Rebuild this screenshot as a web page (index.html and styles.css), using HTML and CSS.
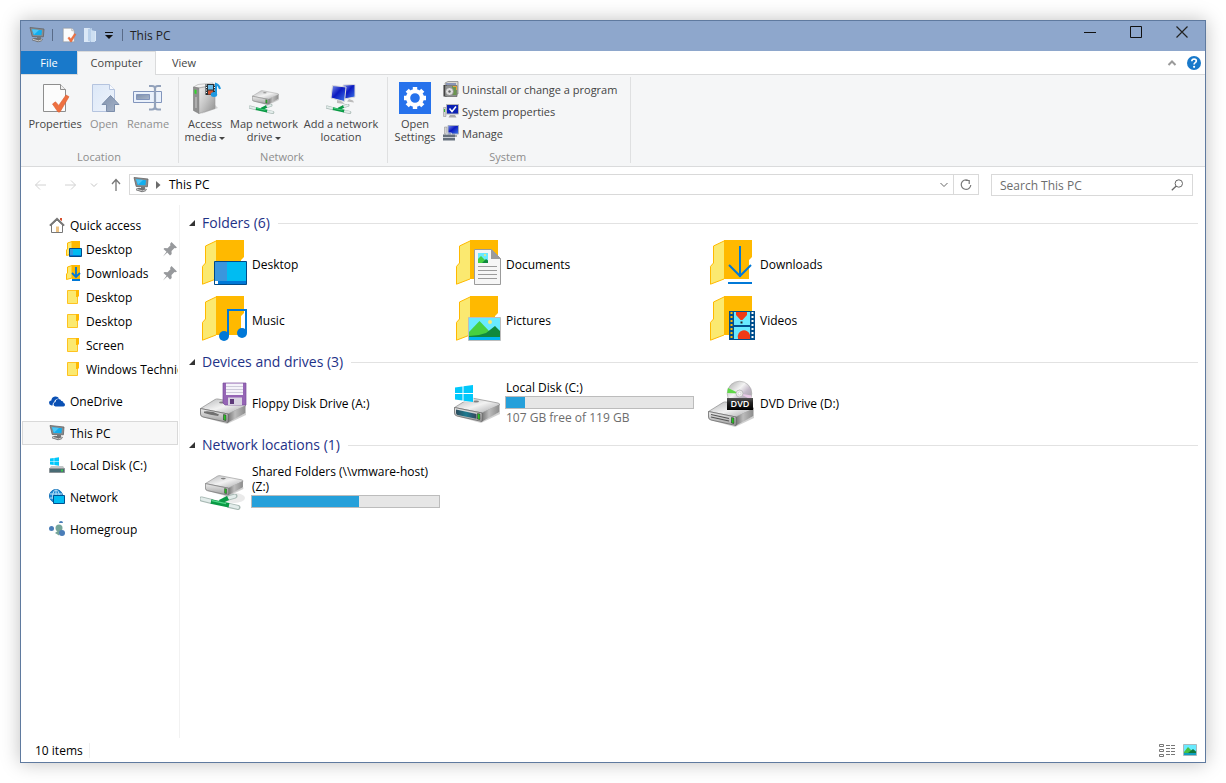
FILE: index.html
```html
<!DOCTYPE html>
<html lang="en">
<head>
<meta charset="utf-8">
<meta name="viewport" content="width=device-width, initial-scale=1">
<title>This PC</title>
<link rel="stylesheet" href="styles.css">
</head>
<body>
<svg class="sprite" aria-hidden="true">
  <defs>
    <linearGradient id="metal-top" x1="0" y1="0" x2="1" y2="1"><stop offset="0" stop-color="#b4b5b7"/><stop offset=".5" stop-color="#f2f2f2"/><stop offset="1" stop-color="#a4a5a7"/></linearGradient>
    <linearGradient id="metal-side" x1="0" y1="0" x2="1" y2="0"><stop offset="0" stop-color="#777"/><stop offset=".4" stop-color="#bcbcbc"/><stop offset="1" stop-color="#8c8c8c"/></linearGradient>
    <linearGradient id="metal-front" x1="0" y1="0" x2="0" y2="1"><stop offset="0" stop-color="#ececec"/><stop offset="1" stop-color="#a0a0a0"/></linearGradient>
    <linearGradient id="teal-front" x1="0" y1="0" x2="1" y2="0"><stop offset="0" stop-color="#2b4b5c"/><stop offset=".5" stop-color="#1e7b90"/><stop offset="1" stop-color="#34465c"/></linearGradient>
    <linearGradient id="screen-blue" x1="0" y1="0" x2="1" y2="1"><stop offset="0" stop-color="#7d93ea"/><stop offset=".45" stop-color="#0c1ac0"/><stop offset="1" stop-color="#3f7be8"/></linearGradient>
    <linearGradient id="pale-page" x1="0" y1="0" x2="1" y2="1"><stop offset="0" stop-color="#dce8f8"/><stop offset="1" stop-color="#eef3fb"/></linearGradient>
    <linearGradient id="slate" x1="0" y1="0" x2="1" y2="1"><stop offset="0" stop-color="#7f90ab"/><stop offset="1" stop-color="#a9b6cb"/></linearGradient>
    <linearGradient id="disc" x1="0" y1="0" x2="1" y2="1"><stop offset="0" stop-color="#a5a5a5"/><stop offset=".4" stop-color="#f3f3f3"/><stop offset=".6" stop-color="#c3b9c8"/><stop offset="1" stop-color="#959595"/></linearGradient>
    <linearGradient id="dvd-plate" x1="0" y1="0" x2="0" y2="1"><stop offset="0" stop-color="#555"/><stop offset=".4" stop-color="#222"/><stop offset="1" stop-color="#000"/></linearGradient>
    <linearGradient id="tower" x1="0" y1="0" x2="1" y2="1"><stop offset="0" stop-color="#f2f2f2"/><stop offset=".5" stop-color="#c4c4c4"/><stop offset="1" stop-color="#8e8e8e"/></linearGradient>

    <symbol id="pc" viewBox="0 0 16 16">
      <path d="M1 .5L15 2l-.6 7.800L3.200 9.500z" fill="#8a8b8d" stroke="#636466" stroke-width=".8"/>
      <path d="M3 2.200L13 3.300l-.6 5L4.600 8z" fill="#12aeee"/>
      <path d="M3 2.200l7 .8-5 4.800z" fill="#4fc6f5"/>
      <path d="M8 9.800l4 .2v2H8z" fill="#77787a"/>
      <path d="M3 11.800l3-1 8 1.200-1.500 2.200-3.500 1-6-2z" fill="#6f7072"/>
      <path d="M3.500 12.200l6 1.700 3.500-1.200" fill="none" stroke="#c9c9c9"/>
    </symbol>

    <symbol id="folder-big" viewBox="0 0 48 48">
      <path d="M16 0h28v17l-3 3v19H16z" fill="#ffb900"/>
      <path d="M2.500 44.200V26.400L5.500 23V6L16 1v38z" fill="#fbe970"/>
      <path d="M16 1L5.500 6v17l-3 3.400v17.800L16 39" fill="none" stroke="#ffb900"/>
    </symbol>

    <symbol id="folder-small" viewBox="0 0 16 16">
      <path d="M1.500 1.500h10v13h-10z" fill="#fbe970" stroke="#ffc220"/>
      <path d="M10 1h3v6l-1 1h-2z" fill="#ffb900"/>
    </symbol>

    <symbol id="folder-open" viewBox="0 0 16 16">
      <path d="M6 0h8v14H6z" fill="#ffb900"/>
      <path d="M.5 14.500V9l1-1V2L6 .5v12.500z" fill="#fbe970" stroke="#ffb900"/>
    </symbol>

    <symbol id="drive" viewBox="0 0 48 48">
      <path d="M2 38l25 7 19-9v-2L27 42z" fill="#9a9a9a" opacity=".45"/>
      <path d="M.5 29.500L15 20.500q1.500-.8 3-.5l26 5q2 .5 1.500 2L28 35z" fill="url(#metal-top)" stroke="#8d8d8d" stroke-width=".7"/>
      <path d="M28 35l17.500-8.500V34L28 43.500z" fill="url(#metal-side)"/>
      <path d="M.5 29.500L28 35v8.500L3 38Q.5 37.500.5 35z" fill="url(#metal-front)" stroke="#6b6b6b" stroke-width=".8"/>
      <path d="M23.500 35.500l2.500.5v5.500l-2.500-.5z" fill="#26c421" stroke="#333" stroke-width=".6"/>
      <ellipse cx="22" cy="23.500" rx="3" ry="1" fill="#808080"/>
    </symbol>

    <symbol id="cable" viewBox="0 0 48 16">
      <path d="M1.500 5l10 2.500M29 11.500l9 2M28 4l7-2" stroke="#a9bab5" stroke-width="5" stroke-linecap="round"/>
      <path d="M2 5l9 2.200M30 11.500l7.500 1.800M29 3.800l5.500-1.600" stroke="#e2ecea" stroke-width="3.200" stroke-linecap="round"/>
      <path d="M11 7.500l18 3.800M20 8l8-4" stroke="#0a9a45" stroke-width="4.600"/>
      <path d="M12 6.700l14 3" stroke="#4fd888" stroke-width="1.300"/>
    </symbol>

    <symbol id="page-check" viewBox="0 0 32 32">
      <path d="M4.500 2.500h17l5 5v22h-22z" fill="#fcfcfc" stroke="#8e8e8e"/>
      <path d="M21.500 2.500v5h5" fill="#eee" stroke="#8e8e8e"/>
      <path d="M13.500 22l3-2.200 3.200 3.600L27 13l3 1.700L21 30h-2z" fill="#ee7040" stroke="#d95b2e" stroke-width=".6"/>
    </symbol>

    <symbol id="windows" viewBox="0 0 18 17">
      <path d="M0 2.500l7.500-1V8H0zM8.500 1.300L18 0v8H8.500zM0 9h7.500v6.600L0 14.500zM8.500 9H18v8l-9.500-1.300z" fill="#00c8fb"/>
    </symbol>

    <symbol id="pin" viewBox="0 0 16 16">
      <path d="M9.500 1L15 6.500l-1.500.8-1-.3-3 3 .2 3L8 14.500 5.300 11.500 1 15.500 4.500 10.800 1.500 8l1-1 3 .2 3-3L8 3z" fill="#97999c"/>
    </symbol>
  </defs>
</svg>

<div class="window">
  <header class="titlebar">
    <svg class="i16" aria-hidden="true"><use href="#pc"/></svg>
    <span class="title-sep"></span>
    <button class="quick" aria-label="Properties"><svg class="i16"><use href="#page-check"/></svg></button>
    <button class="quick" aria-label="New folder">
      <svg class="i16" viewBox="0 0 16 16"><path d="M2 1h6v14H2zM10 4h4v10h-4z" fill="#dbe8f7"/><path d="M6 2l4-1v14l-4-1z" fill="#b9d0ea"/><path d="M9 3l4 1v11H9z" fill="#cddff2"/></svg>
    </button>
    <button class="customize" aria-label="Customize Quick Access Toolbar"><svg width="8" height="8" viewBox="0 0 8 8"><path d="M0 1.500h8" stroke="#111"/><path d="M0 4h8L4 8z" fill="#111"/></svg></button>
    <span class="title-sep"></span>
    <h1 class="title">This PC</h1>
    <div class="caption">
      <button aria-label="Minimize"><svg width="14" height="14" viewBox="0 0 14 14"><path d="M1 7.500h12" stroke="#111"/></svg></button>
      <button aria-label="Maximize"><svg width="14" height="14" viewBox="0 0 14 14"><path d="M1.500 1.500h11v11h-11z" fill="none" stroke="#111"/></svg></button>
      <button aria-label="Close"><svg width="14" height="14" viewBox="0 0 14 14"><path d="M1.500 1.500l11 11M12.500 1.500l-11 11" stroke="#222" stroke-width="1.200"/></svg></button>
    </div>
  </header>

  <div class="tabs" role="tablist">
    <button class="tab file" role="tab">File</button>
    <button class="tab active" role="tab" aria-selected="true">Computer</button>
    <button class="tab" role="tab">View</button>
    <div class="tab-tools">
      <button aria-label="Minimize the Ribbon"><svg width="10" height="8" viewBox="0 0 10 8"><path d="M1.500 6L5 2.500 8.500 6" fill="none" stroke="#9a9a9a" stroke-width="2"/></svg></button>
      <button aria-label="Help"><svg width="14" height="14" viewBox="0 0 14 14"><circle cx="7" cy="7" r="7" fill="#1979ca"/><path d="M4.800 5.200Q4.900 3 7.100 3q2.200.1 2.200 1.900 0 1-1.100 1.700T7.100 8.600" fill="none" stroke="#fff" stroke-width="1.700"/><circle cx="7.100" cy="10.800" r="1.100" fill="#fff"/></svg></button>
    </div>
  </div>

  <div class="ribbon">
    <section class="group">
      <div class="tools">
        <button class="big w60"><svg class="i32"><use href="#page-check"/></svg><span>Properties</span></button>
        <button class="big w38" disabled>
          <svg class="i32" viewBox="0 0 32 32"><path d="M4.500 2.500h17l5 5v22h-22z" fill="url(#pale-page)" stroke="#b5c4df"/><path d="M21.500 2.500v5h5" fill="#f7faff" stroke="#b5c4df"/><path d="M22.500 13.500l8.500 9h-4.500v7h-8v-7H14z" fill="url(#slate)" stroke="#7c8eab"/></svg>
          <span>Open</span></button>
        <button class="big w50" disabled>
          <svg class="i32" viewBox="0 0 32 32"><path d="M1.500 9.500h28v11h-28z" fill="#eaf1fb" stroke="#8295bc"/><path d="M4.500 12.500h13v5h-13z" fill="url(#slate)" stroke="#8295bc"/><path d="M17 4h3q3 0 3 2.500v18q0 3-3 3h-3M29 4h-3q-3 0-3 2.500v18q0 3 3 3h3" fill="none" stroke="#93a2bb" stroke-width="2.200"/></svg>
          <span>Rename</span></button>
      </div>
      <h2>Location</h2>
    </section>
    <section class="group network">
      <div class="tools">
        <button class="big w44">
          <svg class="i32" viewBox="0 0 32 32"><path d="M12 32l17-6-3-3z" fill="#999" opacity=".4"/><path d="M4.500 5L9 2.500 24 1v2L9 6z" fill="#f2f2f2" stroke="#aaa" stroke-width=".6"/><path d="M4.500 5L10 6v25.500l-5.500-3z" fill="#8f8f8f" stroke="#777" stroke-width=".6"/><path d="M10 6L26 3.500v23L10 31.500z" fill="url(#tower)" stroke="#999" stroke-width=".6"/><path d="M5.500 7.500v4l2 .5V8z" fill="#2fd52a"/><path d="M7 15v11" stroke="#ccc"/><path d="M16.500 2h10v11h-10z" fill="#263238"/><path d="M19 3h5v4.500h-5z" fill="#6bbbe8"/><path d="M19 8.500h5v4h-5z" fill="#d0522f"/><path d="M17.500 2.500v10M25.500 2.500v10" stroke="#fff" stroke-dasharray="1 1.500"/><path d="M27 12V2q3 1 4 5" fill="none" stroke="#1e98e0" stroke-width="2"/><ellipse cx="25" cy="12.500" rx="3.200" ry="2.500" fill="#1e98e0"/></svg>
          <span>Access<br>media <i class="caret"></i></span></button>
        <button class="big w74">
          <svg class="i32" viewBox="0 0 32 32"><use href="#drive" x="4" y="-3" width="28" height="28"/><use href="#cable" x="1" y="22" width="30" height="10"/></svg>
          <span>Map network<br>drive <i class="caret"></i></span></button>
        <button class="big w80">
          <svg class="i32" viewBox="0 0 32 32"><path d="M18 3l12-.5V15l-11 2z" fill="url(#screen-blue)" stroke="#ddd"/><path d="M7.500 3.500L21 5l-1.500 14.500L6 16z" fill="url(#screen-blue)" stroke="#dcdcdc"/><path d="M12 18l4 1 4 3-8-1zM24 17l4 1.500 1 2-7-1z" fill="#bcbcbc"/><use href="#cable" x="1" y="22" width="30" height="10"/></svg>
          <span>Add a network<br>location</span></button>
      </div>
      <h2>Network</h2>
    </section>
    <section class="group system">
      <div class="tools">
        <button class="big w46">
          <svg class="i32" viewBox="0 0 32 32"><path d="M0 0h32v32H0z" fill="#2672ec"/><circle cx="16" cy="16" r="6.900" fill="none" stroke="#fff" stroke-width="4.200"/><g stroke="#fff" stroke-width="4.400"><path d="M16 5v4M16 23v4M5 16h4M23 16h4M8.200 8.200l2.800 2.800M21 21l2.800 2.800M23.800 8.200L21 11M11 21l-2.800 2.800"/></g></svg>
          <span>Open<br>Settings</span></button>
        <div class="small-list">
          <button><svg class="i16" viewBox="0 0 16 16"><path d="M2 2l3-1.500h10V13H4z" fill="#dedbd2" stroke="#888" stroke-width=".8"/><path d="M.5 4v11.500H4V4z" fill="#333"/><path d="M2 4.500h12v11H2z" fill="#8d9190" stroke="#666" stroke-width=".7"/><path d="M9 5h4.500v9H9z" fill="#6c9650"/><path d="M3 3h10" stroke="#6e7fae" stroke-width="1.500"/><circle cx="6.500" cy="10.500" r="4" fill="#dedede" stroke="#777" stroke-width=".7"/><circle cx="6.500" cy="10.500" r="1.200" fill="#666"/><path d="M10 5.500h3.500V9" fill="none" stroke="#e8a33a"/></svg>Uninstall or change a program</button>
          <button><svg class="i16" viewBox="0 0 16 16"><path d="M.5 4.500h2.500v9H.5z" fill="#d4d4d4" stroke="#888" stroke-width=".5"/><path d="M1 6h1v3H1z" fill="#38b838"/><path d="M3.500 1.500h12v9.500h-12z" fill="#0b20b4" stroke="#b5b5b5"/><path d="M7 12h5l1.500 2.500h-8z" fill="#aaa"/><path d="M6.500 5.500l2.500 3 4-5" fill="none" stroke="#fff" stroke-width="1.500"/></svg>System properties</button>
          <button><svg class="i16" viewBox="0 0 16 16"><path d="M1.500 2h2.500v7H1.500z" fill="#d4d4d4" stroke="#888" stroke-width=".5"/><path d="M5 .5h10.500V9H5z" fill="url(#screen-blue)" stroke="#a5aec0"/><path d="M9 10h5v2H9z" fill="#aaa"/><path d="M0 9.500h12v6H0z" fill="#65707c"/><path d="M3.500 9.500V8h5v1.500M0 12.500h12" fill="none" stroke="#c9ced4"/></svg>Manage</button>
        </div>
      </div>
      <h2>System</h2>
    </section>
  </div>

  <div class="navbar">
    <div class="history">
      <button aria-label="Back" disabled><svg width="14" height="12" viewBox="0 0 14 12"><path d="M6 1.500L1.500 6 6 10.500M1.500 6H12" fill="none" stroke="#d2d2d2"/></svg></button>
      <button class="forward" aria-label="Forward" disabled><svg width="14" height="12" viewBox="0 0 14 12"><path d="M8 1.500L12.500 6 8 10.500M12.500 6H2" fill="none" stroke="#d2d2d2"/></svg></button>
      <button class="recent" aria-label="Recent locations" disabled><svg width="8" height="6" viewBox="0 0 8 6"><path d="M1 1.500l3 3 3-3" fill="none" stroke="#c4c4c4"/></svg></button>
      <button class="up" aria-label="Up"><svg width="12" height="14" viewBox="0 0 12 14"><path d="M2 6l4-4.500L10 6M6 1.500V13" fill="none" stroke="#777" stroke-width="1.300"/></svg></button>
    </div>
    <div class="address">
      <svg class="i16" aria-hidden="true"><use href="#pc"/></svg>
      <svg class="crumb-arrow" width="5" height="8" viewBox="0 0 5 8"><path d="M0 0l4.500 4L0 8z" fill="#6b6b6b"/></svg>
      <a class="crumb" href="#">This PC</a>
      <button class="drop" aria-label="Previous locations"><svg width="8" height="6" viewBox="0 0 8 6"><path d="M.5 1l3.500 3.500L7.500 1" fill="none" stroke="#666"/></svg></button>
      <button class="refresh" aria-label="Refresh"><svg width="12" height="13" viewBox="0 0 12 13"><path d="M8 2.200A4.800 4.800 0 1 0 10.800 7M5.500 2.500H9.200V6" fill="none" stroke="#777" stroke-width="1.200"/></svg></button>
    </div>
    <label class="search">
      <input type="search" aria-label="Search This PC" placeholder="Search This PC">
      <svg width="13" height="12" viewBox="0 0 13 12"><circle cx="7.800" cy="4.500" r="3.700" fill="none" stroke="#666"/><path d="M5 7.300L.8 11.300" stroke="#666" stroke-width="1.300"/></svg>
    </label>
  </div>

  <div class="body">
    <nav class="tree" aria-label="Navigation pane">
      <ul>
        <li><a href="#"><svg class="i16" viewBox="0 0 16 16"><path d="M2.500 8v7.500h11V8L8 3z" fill="#fff" stroke="#777"/><path d="M7 9.500h3V15H7z" fill="#edc283"/><path d="M.8 8.700L8 1.800l7.200 6.900" fill="none" stroke="#777" stroke-width="1.700"/><path d="M11 1h2v3l-2-1z" fill="#d6502f"/></svg><span>Quick access</span></a>
          <ul>
            <li><a href="#"><svg class="i16" viewBox="0 0 16 16"><use href="#folder-open"/><path d="M3.500 7.500h12v8h-12z" fill="#00bcf2" stroke="#004a87"/><path d="M4 8h3v6H4z" fill="#3a96dd"/><path d="M4 14h11v1H4z" fill="#0078d7"/></svg><span>Desktop</span><svg class="i16 pin"><use href="#pin"/></svg></a></li>
            <li><a href="#"><svg class="i16" viewBox="0 0 16 16"><use href="#folder-open"/><path d="M10 2v10M6 8l4 4 4-4" fill="none" stroke="#0078d7" stroke-width="1.800"/><path d="M6 15h8" stroke="#0078d7" stroke-width="2"/></svg><span>Downloads</span><svg class="i16 pin"><use href="#pin"/></svg></a></li>
            <li><a href="#"><svg class="i16"><use href="#folder-small"/></svg><span>Desktop</span></a></li>
            <li><a href="#"><svg class="i16"><use href="#folder-small"/></svg><span>Desktop</span></a></li>
            <li><a href="#"><svg class="i16"><use href="#folder-small"/></svg><span>Screen</span></a></li>
            <li><a href="#"><svg class="i16"><use href="#folder-small"/></svg><span>Windows Technic</span></a></li>
          </ul>
        </li>
        <li><a href="#"><svg class="i16" viewBox="0 0 16 16"><path d="M2.500 12.500Q0 12 0 9.700T2.300 7.400Q2.600 4 6 3.500q2.800-.3 4.200 2Q6 5.500 5.200 9 3.500 9.500 3.500 12.500z" fill="#0a50b4"/><path d="M6.500 13.500Q4.500 13 4.500 11.300T6.500 9q.3-3 3-3 2.200 0 2.900 2 2-.2 2.200 2 1.400.3 1.400 1.700 0 1.500-1.500 1.800z" fill="#0a50b4"/></svg><span>OneDrive</span></a></li>
        <li><a class="selected" href="#" aria-current="page"><svg class="i16"><use href="#pc"/></svg><span>This PC</span></a></li>
        <li><a href="#"><svg class="i16" viewBox="0 0 16 16"><use href="#windows" x="1" y="0" width="9" height="9"/><path d="M2 9h12l2 3H0z" fill="#c3c6c8"/><path d="M.5 11.500h15v4H.5z" fill="#496b74" stroke="#8c9498"/><path d="M12 12.500h2v2h-2z" fill="#39c54a"/></svg><span>Local Disk (C:)</span></a></li>
        <li><a href="#"><svg class="i16" viewBox="0 0 16 16"><circle cx="7" cy="7" r="6.500" fill="#1d87d3" stroke="#1170b8"/><path d="M7 1v12M1 5h12M1 9h12" stroke="#bfe6fb"/><ellipse cx="7" cy="7" rx="3.300" ry="6" fill="none" stroke="#bfe6fb"/><path d="M4.500 6.500h11v8h-11z" fill="#00bcf2" stroke="#00508f"/></svg><span>Network</span></a></li>
        <li><a href="#"><svg class="i16" viewBox="0 0 16 16"><circle cx="2.500" cy="7.500" r="2.500" fill="#4a7db8"/><circle cx="10" cy="7" r="3.500" fill="#75a599"/><path d="M6 12q4-3.500 6-2l-2 4.500z" fill="#75a599"/><path d="M10 2a2 2 0 0 1 4 0z" fill="#4a7db8"/><circle cx="13" cy="12" r="3" fill="#4a7db8"/></svg><span>Homegroup</span></a></li>
      </ul>
    </nav>

    <main class="content">
      <section>
        <h2 class="heading"><svg class="twist" viewBox="0 0 6 6"><path d="M6 0v6H0z" fill="#333"/></svg>Folders (6)</h2>
        <div class="items">
          <a class="item" href="#"><svg class="i48" viewBox="0 0 48 48"><use href="#folder-big"/><path d="M14.500 21.500h32v23h-32z" fill="#00bcf2" stroke="#004a87"/><path d="M15 22h12v19H15z" fill="#3a96dd"/><path d="M15 41h31v3H15z" fill="#0078d7"/><path d="M15 41h3v3h-3z" fill="#fff"/></svg><span>Desktop</span></a>
          <a class="item" href="#"><svg class="i48" viewBox="0 0 48 48"><use href="#folder-big"/><path d="M20.500 9.500h17l9 9v26h-26z" fill="#f6f6f6" stroke="#9b9b9b"/><path d="M37 9l10 10H37z" fill="#9b9b9b"/><path d="M24 13h10v10H24z" fill="#69eaff"/><path d="M24 23v-4l3-3 7 7z" fill="#47d041"/><path d="M28 23l4-4 2 1.500V23z" fill="#10893e"/><circle cx="31" cy="15" r="1" fill="#fbe970"/><path d="M24 26.500h19M24 30.500h19M24 34.500h19M24 38.500h19" stroke="#9b9b9b"/></svg><span>Documents</span></a>
          <a class="item" href="#"><svg class="i48" viewBox="0 0 48 48"><use href="#folder-big"/><path d="M32 6v31M21 25l11 11 11-11" fill="none" stroke="#0078d7" stroke-width="2"/><path d="M20 40h24v5H20z" fill="#fff"/><path d="M20 43h24" stroke="#0078d7" stroke-width="2"/></svg><span>Downloads</span></a>
          <a class="item" href="#"><svg class="i48" viewBox="0 0 48 48"><use href="#folder-big"/><circle cx="24" cy="40" r="5" fill="#0078d7"/><circle cx="42" cy="37" r="5" fill="#0078d7"/><path d="M28 40V14h18v23" fill="none" stroke="#0078d7" stroke-width="2"/></svg><span>Music</span></a>
          <a class="item" href="#"><svg class="i48" viewBox="0 0 48 48"><use href="#folder-big"/><path d="M14.500 21.500h32v23h-32z" fill="#69eaff" stroke="#bdbdbd"/><path d="M15 36l10.500-11L36 36v4H15z" fill="#47d041"/><path d="M15 41v-1l10-1 7-2 9-7 5 5v6z" fill="#10893e"/><path d="M15 41h31v3H15z" fill="#00b7f0"/><circle cx="36" cy="26" r="2" fill="#fbe970"/></svg><span>Pictures</span></a>
          <a class="item" href="#"><svg class="i48" viewBox="0 0 48 48"><use href="#folder-big"/><path d="M21 15h26v29H21z" fill="#004e8c"/><path d="M26 16h16v13H26zM26 31h16v12H26z" fill="#69eaff"/><path d="M28 16h11v3l-4.500 5h-2L28 19z" fill="#f03a17"/><path d="M32.500 25.500h2v2h-2z" fill="#222"/><path d="M30 43v-1a6 6 0 0 1 12-3v4z" fill="#f03a17"/><path d="M23.500 16v27" stroke="#ffb900" stroke-width="2" stroke-dasharray="2 2"/><path d="M44.500 16v27" stroke="#fff" stroke-width="2" stroke-dasharray="2 2"/></svg><span>Videos</span></a>
        </div>
      </section>
      <section>
        <h2 class="heading"><svg class="twist" viewBox="0 0 6 6"><path d="M6 0v6H0z" fill="#333"/></svg>Devices and drives (3)</h2>
        <div class="items">
          <a class="item" href="#"><svg class="i48" viewBox="0 0 48 48"><use href="#drive"/><path d="M4 32.500q8-1 15 3l-1 1.500q-8-1-14-3z" fill="#707070"/><path d="M23 4h23v22H25l-2-2z" fill="#9565b5" stroke="#7a4d9c" stroke-width=".7"/><path d="M26 4.500h17V16H26z" fill="#f5f3fa"/><path d="M26 7.500h17M26 10.500h17M26 13.500h17" stroke="#bcb6cc" stroke-width=".7"/><path d="M28 18.500h14V26H28z" fill="#d9d4e2"/><path d="M30 20h4v5h-4z" fill="#5d3a7a"/></svg><span>Floppy Disk Drive (A:)</span></a>
          <a class="item" href="#"><svg class="i48" viewBox="0 0 48 48"><use href="#drive" y="-1"/><path d="M2 30.500L22.500 35v4.800L3.500 36Q2 35.500 2 34z" fill="url(#teal-front)"/><path d="M0 5h20v18H0z" fill="#fff" opacity=".5"/><use href="#windows" x="1" y="6" width="18" height="17"/></svg>
            <span class="details"><span>Local Disk (C:)</span><progress max="100" value="10" aria-label="Local Disk (C:) space used"></progress><span class="muted">107 GB free of 119 GB</span></span></a>
          <a class="item" href="#"><svg class="i48" viewBox="0 0 48 48"><use href="#drive" y="3"/><path d="M3 35.500l18 4M3 38l18 4" stroke="#555" stroke-width="1.200"/><circle cx="31.500" cy="14.500" r="12.300" fill="url(#disc)" stroke="#a5a5a5" stroke-width=".6"/><path d="M31.500 14.500L20 9l-.8 5z" fill="#5fd848"/><path d="M31.500 14.500l11 6 1-4z" fill="#e7c9e6"/><circle cx="31.500" cy="14.500" r="3.500" fill="#ececec" stroke="#aaa" stroke-width=".7"/><circle cx="31.500" cy="14.500" r="1.400" fill="#fff" stroke="#bbb" stroke-width=".5"/><path d="M19 19h26v12H19z" fill="url(#dvd-plate)"/><text x="32" y="28" text-anchor="middle" class="disc-label">DVD</text></svg><span>DVD Drive (D:)</span></a>
        </div>
      </section>
      <section>
        <h2 class="heading"><svg class="twist" viewBox="0 0 6 6"><path d="M6 0v6H0z" fill="#333"/></svg>Network locations (1)</h2>
        <div class="items">
          <a class="item" href="#"><svg class="i48" viewBox="0 0 48 48"><ellipse cx="34" cy="36" rx="11" ry="5" fill="#888" opacity=".18"/><use href="#drive" x="5" y="-3" width="40" height="40"/><use href="#cable" y="32" width="48" height="16"/></svg>
            <span class="details"><span>Shared Folders (\\vmware-host) (Z:)</span><progress max="100" value="57" aria-label="Shared Folders space used"></progress></span></a>
        </div>
      </section>
    </main>
  </div>

  <footer class="status">
    <span class="count">10 items</span>
    <div class="views">
      <button aria-label="Details view"><svg width="16" height="13" viewBox="0 0 16 13"><path d="M.5.500h4v2h-4zM.5 5.500h4v2h-4zM.5 10.500h4v2h-4z" fill="#fff" stroke="#777"/><path d="M7 1.500h4M12 1.500h4M7 4.500h4M12 4.500h4M7 7.500h4M12 7.500h4M7 10.500h4M12 10.500h4" stroke="#777"/></svg></button>
      <button aria-label="Large icons view"><svg width="14" height="12" viewBox="0 0 14 12"><path d="M.5.500h13v11H.5z" fill="#69eaff" stroke="#a9b9bd"/><path d="M1 8l4-5 5 5v1H1z" fill="#47c041"/><path d="M5 9l5-4 3 2.500V9z" fill="#10793e"/><path d="M1 9h12v2H1z" fill="#0f9fc0"/></svg></button>
    </div>
  </footer>
</div>
</body>
</html>
```
FILE: styles.css
```css
* { box-sizing: border-box; }

body {
  margin: 0;
  min-height: 100vh;
  padding: 20px;
  display: flex;
  background: #fff;
  font: 12px/15px "Open Sans", "Noto Sans", sans-serif;
  color: #000;
}

button, input { font: inherit; color: inherit; }
button { border: 0; padding: 0; background: none; }
a { color: inherit; text-decoration: none; }
h1, h2 { margin: 0; font-weight: 400; }
ul { margin: 0; padding: 0; list-style: none; }
svg { display: block; flex: none; }

.sprite { position: absolute; width: 0; height: 0; }
.i16 { width: 16px; height: 16px; }
.i32 { width: 32px; height: 32px; }
.i48 { width: 48px; height: 48px; }

.window {
  flex: 1;
  min-width: 0;
  display: flex;
  flex-direction: column;
  border: 1px solid #5f7a9f;
  background: #fff;
  box-shadow: 0 0 18px rgba(0, 0, 0, .25);
}

/* Title bar */
.titlebar {
  display: flex;
  align-items: center;
  height: 30px;
  padding: 0 0 2px 8px;
  background: #8ea7cc;
}
.title-sep { width: 1px; height: 12px; margin: 0 7px; background: #596b88; }
.quick { margin: 0 4px 0 1px; }
.customize { margin: 0 2px 0 3px; }
.title { font-size: 12px; color: #222; }
.caption { display: flex; align-self: flex-start; margin-left: auto; }
.caption button { width: 46px; height: 21px; display: grid; place-items: center; }

/* Tabs */
.tabs { display: flex; height: 24px; border-bottom: 1px solid #dadbdc; }
.tab { min-width: 56px; font-size: 11px; color: #444; }
.tab.file { background: #1979ca; color: #fff; }
.tab.active {
  min-width: 79px;
  margin-bottom: -1px;
  padding-bottom: 2px;
  border: 1px solid #dadbdc;
  border-bottom: 0;
  background: #f5f6f7;
}
.tab-tools { display: flex; align-items: center; gap: 10px; margin-left: auto; padding-right: 4px; }

/* Ribbon */
.ribbon { display: flex; height: 92px; padding: 2px 0 3px; border-bottom: 1px solid #dadbdc; background: #f5f6f7; }
.group {
  display: flex;
  flex-direction: column;
  justify-content: space-between;
  padding: 1px 5px 0 4px;
  border-right: 1px solid #dfe0e1;
  color: #444;
  font-size: 11px;
}
.group.network { padding-right: 6px; }
.group.system { padding-right: 7px; }
.group h2 { font-size: 11px; line-height: 12px; text-align: center; color: #8d8d8d; }
.tools { display: flex; align-items: flex-start; }
.big { display: flex; flex-direction: column; align-items: center; gap: 3px; padding-top: 4px; line-height: 13px; white-space: nowrap; }
.big:disabled { color: #8f8f8f; }
.w38 { width: 38px; }
.w44 { width: 44px; }
.w46 { width: 46px; }
.w50 { width: 50px; }
.w60 { width: 60px; }
.w74 { width: 74px; }
.w80 { width: 80px; }
.caret { display: inline-block; vertical-align: middle; border: 3px solid transparent; border-top-color: #444; border-bottom: 0; }
.small-list { display: flex; flex-direction: column; padding: 0 6px 0 5px; }
.small-list button { display: flex; align-items: center; gap: 3px; height: 22px; white-space: nowrap; }

/* Address row */
.navbar { display: flex; align-items: flex-start; padding: 7px 12px 9px 13px; }
.history { display: flex; align-items: center; height: 21px; }
.history button { width: 14px; margin-right: 15px; display: grid; place-items: center; }
.history .forward { margin-right: 13px; }
.history .recent { width: 8px; margin-right: 12px; }
.history .up { width: 12px; margin-right: 7px; }
.address { flex: 1; display: flex; align-items: center; height: 21px; padding-left: 3px; border: 1px solid #d9d9d9; }
.crumb-arrow { margin: 0 8px 0 7px; }
.drop { display: grid; place-items: center; width: 18px; height: 19px; margin-left: auto; }
.refresh { display: grid; place-items: center; width: 25px; height: 19px; border-left: 1px solid #d9d9d9; }
.search { display: flex; align-items: center; width: 202px; height: 22px; margin-left: 12px; padding: 0 8px; border: 1px solid #d9d9d9; }
.search input { flex: 1; min-width: 0; padding: 0; border: 0; outline: 0; background: none; }
.search input::placeholder { color: #6d6d6d; opacity: 1; }

/* Navigation pane */
.body { flex: 1; display: flex; min-height: 0; }
.tree { flex: none; width: 159px; padding: 8px 1px 0; border-right: 1px solid #f2f2f2; white-space: nowrap; }
.tree > ul { display: grid; grid-template-columns: minmax(0, 1fr); gap: 8px; }
.tree a { display: flex; align-items: center; gap: 5px; height: 24px; padding-left: 26px; border: 1px solid transparent; }
.tree a > span { min-width: 0; overflow: hidden; }
.tree ul ul a { gap: 4px; padding-left: 43px; border-right: 0; }
.tree .selected { border-color: #d9d9d9; background: #f7f7f7; }
.pin { margin-left: auto; }

/* Content */
.content { flex: 1; min-width: 0; padding: 6px 7px 0 9px; }
.content section { margin-bottom: 2px; }
.heading { display: flex; align-items: center; height: 25px; padding-bottom: 1px; font-size: 14px; line-height: 22px; color: #1e3287; }
.heading::after { content: ""; flex: 1; height: 1px; margin-left: 8px; background: #e2e2e2; }
.twist { width: 6px; height: 6px; margin-right: 7px; }
.items { display: grid; grid-template-columns: repeat(auto-fill, 254px); grid-auto-rows: 56px; padding-left: 11px; }
.item { display: flex; align-items: center; gap: 3px; }
.item > span { padding-left: 1px; }
.item > .details { display: flex; flex-direction: column; width: 189px; padding-left: 0; }
.details > span { padding-left: 1px; }
.details progress { display: block; width: 100%; height: 13px; margin: 1px 0; border: 1px solid #bcbcbc; background: #e6e6e6; appearance: none; }
.details progress::-webkit-progress-bar { background: #e6e6e6; }
.details progress::-webkit-progress-value { background: #26a0da; }
.details .muted { padding-bottom: 2px; color: #6d6d6d; }
.disc-label { font: 600 9px "Open Sans", sans-serif; fill: #fff; }

/* Status bar */
.status { display: flex; align-items: center; justify-content: space-between; height: 24px; padding: 0 8px 0 14px; }
.count { padding-right: 6px; border-right: 1px solid #f0f0f0; }
.views { display: flex; align-items: center; gap: 8px; }
```
